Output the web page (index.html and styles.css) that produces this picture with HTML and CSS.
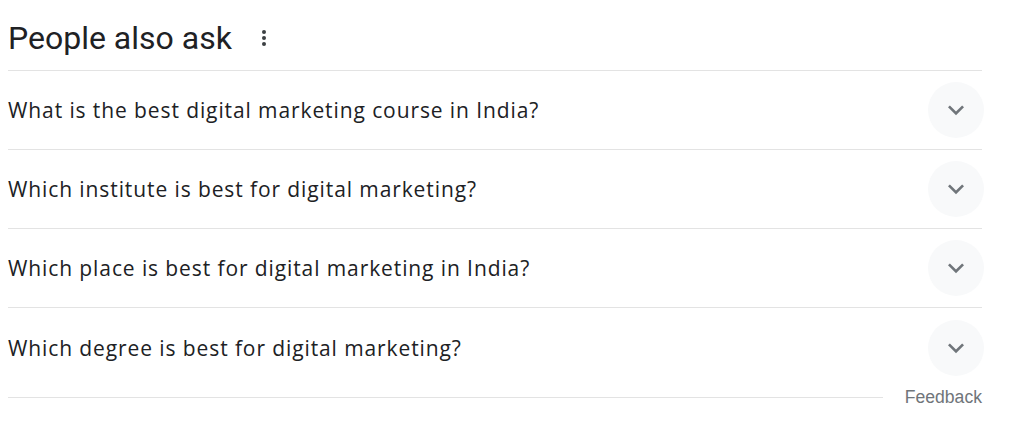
FILE: index.html
```html
<!DOCTYPE html>
<html lang="en">
  <head>
    <meta charset="UTF-8" />
    <title>People also ask</title>
    <link rel="stylesheet" href="styles.css">
  </head>
  <body>
    <div class="paa">
      <div class="paa-head">
        <h2>People also ask</h2>
        <span class="more">
          <svg width="24" height="24" viewBox="0 0 24 24"><circle cx="12" cy="6" r="2"/><circle cx="12" cy="12" r="2"/><circle cx="12" cy="18" r="2"/></svg>
        </span>
      </div>

      <div class="question">
        <span>What is the best digital marketing course in India?</span>
        <span class="toggle"><svg width="32" height="32" viewBox="0 0 24 24"><path d="M16.59 8.59 12 13.17 7.41 8.59 6 10l6 6 6-6z"/></svg></span>
      </div>
      <div class="question">
        <span>Which institute is best for digital marketing?</span>
        <span class="toggle"><svg width="32" height="32" viewBox="0 0 24 24"><path d="M16.59 8.59 12 13.17 7.41 8.59 6 10l6 6 6-6z"/></svg></span>
      </div>
      <div class="question">
        <span>Which place is best for digital marketing in India?</span>
        <span class="toggle"><svg width="32" height="32" viewBox="0 0 24 24"><path d="M16.59 8.59 12 13.17 7.41 8.59 6 10l6 6 6-6z"/></svg></span>
      </div>
      <div class="question last">
        <span>Which degree is best for digital marketing?</span>
        <span class="toggle"><svg width="32" height="32" viewBox="0 0 24 24"><path d="M16.59 8.59 12 13.17 7.41 8.59 6 10l6 6 6-6z"/></svg></span>
      </div>

      <div class="paa-foot">
        <div class="rule"></div>
        <span class="feedback">Feedback</span>
      </div>
    </div>
  </body>
</html>
```

FILE: styles.css
```css
body {
  margin: 0;
  padding: 0 42px 0 8px;
  background: #fff;
  font-family: "Open Sans", "Liberation Sans", sans-serif;
  color: #202124;
}

.paa-head {
  display: flex;
  align-items: center;
  height: 71px;
  border-bottom: 1px solid #e3e3e3;
  box-sizing: border-box;
  padding-top: 6px;
}

.paa-head h2 {
  margin: 0;
  font-family: Roboto, "Liberation Sans", sans-serif;
  font-size: 32px;
  font-weight: 400;
  color: #202124;
}

.more {
  display: flex;
  margin-left: 20px;
  fill: #3c4043;
}

.question {
  display: flex;
  align-items: center;
  justify-content: space-between;
  height: 79px;
  border-bottom: 1px solid #e3e3e3;
  box-sizing: border-box;
  font-size: 21px;
  letter-spacing: 0.9px;
  color: #202124;
}

.question.last {
  border-bottom: none;
}

.toggle {
  display: flex;
  align-items: center;
  justify-content: center;
  width: 56px;
  height: 56px;
  margin-right: -2px;
  border-radius: 50%;
  background: #f8f9fa;
  fill: #70757a;
}

.paa-foot {
  display: flex;
  align-items: center;
  gap: 22px;
}

.rule {
  flex: 1;
  border-top: 1px solid #e3e3e3;
}

.feedback {
  font-family: "Liberation Sans", Arial, sans-serif;
  font-size: 17.6px;
  color: #70757a;
}
```
